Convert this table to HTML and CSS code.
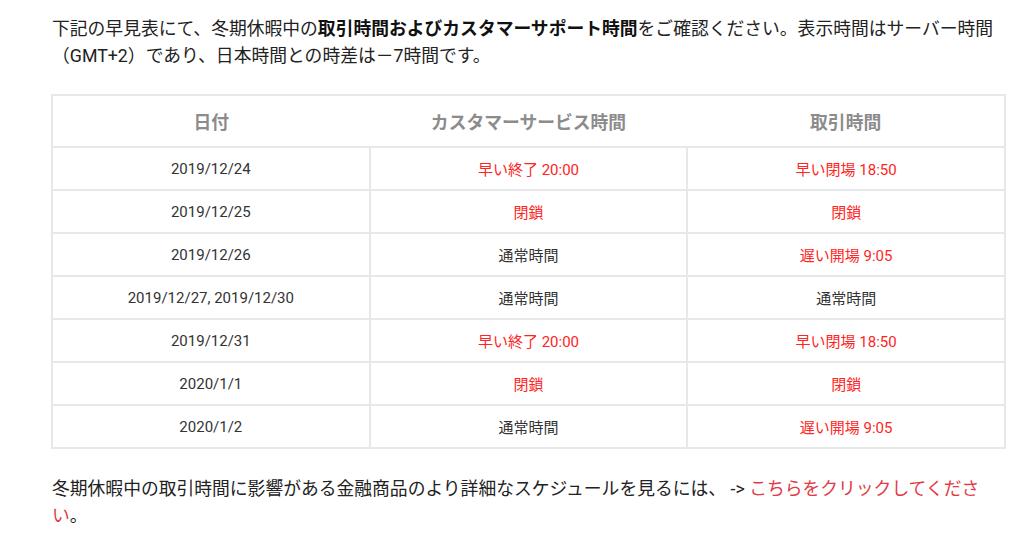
FILE: index.html
```html
<!DOCTYPE html>
<html lang="ja">
<head>
<meta charset="utf-8">
<link rel="stylesheet" href="styles.css">
</head>
<body>
<div class="content">
  <p class="intro">下記の早見表にて、冬期休暇中の<strong>取引時間およびカスタマーサポート時間</strong>をご確認ください。表示時間はサーバー時間（GMT+2）であり、日本時間との時差は－7時間です。</p>
  <table class="schedule">
    <thead>
      <tr><th>日付</th><th>カスタマーサービス時間</th><th>取引時間</th></tr>
    </thead>
    <tbody>
      <tr><td>2019/12/24</td><td class="red">早い終了 20:00</td><td class="red">早い閉場 18:50</td></tr>
      <tr><td>2019/12/25</td><td class="red">閉鎖</td><td class="red">閉鎖</td></tr>
      <tr><td>2019/12/26</td><td>通常時間</td><td class="red">遅い開場 9:05</td></tr>
      <tr><td>2019/12/27, 2019/12/30</td><td>通常時間</td><td>通常時間</td></tr>
      <tr><td>2019/12/31</td><td class="red">早い終了 20:00</td><td class="red">早い閉場 18:50</td></tr>
      <tr><td>2020/1/1</td><td class="red">閉鎖</td><td class="red">閉鎖</td></tr>
      <tr><td>2020/1/2</td><td>通常時間</td><td class="red">遅い開場 9:05</td></tr>
    </tbody>
  </table>
  <p class="outro">冬期休暇中の取引時間に影響がある金融商品のより詳細なスケジュールを見るには、 -&gt; <a class="link" href="#">こちらをクリックしてください</a>。</p>
</div>
</body>
</html>
```
FILE: styles.css
```css
html, body {
  margin: 0;
  padding: 0;
  background: #ffffff;
}
body {
  font-family: Roboto, "Noto Sans CJK JP", sans-serif;
  color: #222222;
}
.content {
  width: 955px;
  padding: 16px 0 0 51px;
}
.intro, .outro {
  margin: 0;
  font-size: 17.8px;
  line-height: 26.5px;
  padding-left: 1px;
}
.intro strong {
  font-weight: 700;
  color: #111111;
}
.schedule {
  margin-top: 25px;
  width: 955px;
  border-collapse: collapse;
  table-layout: fixed;
  border: 2px solid #e8e8e8;
}
.schedule th {
  height: 50px;
  font-size: 17.8px;
  font-weight: 700;
  color: #8c8c8c;
  text-align: center;
  border-bottom: 2px solid #e8e8e8;
  padding: 0;
}
.schedule td {
  height: 41px;
  font-size: 15px;
  color: #333333;
  text-align: center;
  border: 2px solid #e8e8e8;
  padding: 0;
}
.schedule td.red {
  color: #ff2424;
}
.outro {
  margin-top: 27px;
}
.link {
  color: #e23a44;
  text-decoration: none;
}
```
